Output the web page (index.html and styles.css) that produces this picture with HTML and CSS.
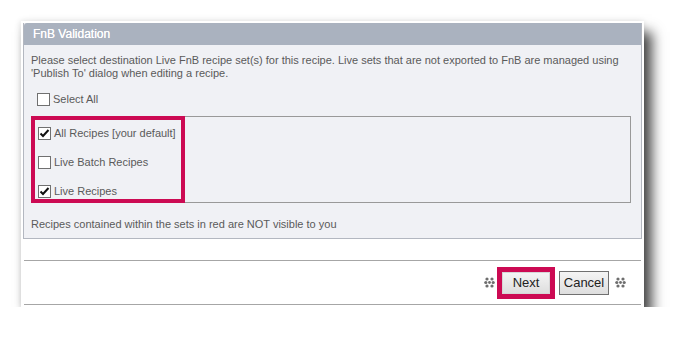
FILE: index.html
```html
<!DOCTYPE html>
<html>
<head>
<link rel="stylesheet" href="styles.css">
</head>
<body>
<div class="dialog">
  <div class="panel">
    <div class="panel-title">FnB Validation</div>
    <div class="panel-body">
      <p class="intro">Please select destination Live FnB recipe set(s) for this recipe. Live sets that are not exported to FnB are managed using 'Publish To' dialog when editing a recipe.</p>

      <label class="check select-all"><span class="box"></span>Select All</label>

      <div class="sets">
        <div class="sets-list">
          <label class="check">
            <span class="box"><svg width="11" height="11" viewBox="0 0 11 11"><path d="M1.5 5.5 L4 8 L9.5 2" fill="none" stroke="#111" stroke-width="2"/></svg></span>All Recipes [your default]
          </label>
          <label class="check"><span class="box"></span>Live Batch Recipes</label>
          <label class="check">
            <span class="box"><svg width="11" height="11" viewBox="0 0 11 11"><path d="M1.5 5.5 L4 8 L9.5 2" fill="none" stroke="#111" stroke-width="2"/></svg></span>Live Recipes
          </label>
        </div>
      </div>

      <p class="note">Recipes contained within the sets in red are NOT visible to you</p>
    </div>
  </div>

  <div class="actions">
    <svg class="dots" width="11" height="11" viewBox="0 0 11 11">
      <circle cx="3" cy="2" r="1.6"/><circle cx="8" cy="2" r="1.6"/>
      <circle cx="1.8" cy="5.5" r="1.6"/><circle cx="5.5" cy="5.5" r="1.4"/><circle cx="9.2" cy="5.5" r="1.6"/>
      <circle cx="3" cy="9" r="1.6"/><circle cx="8" cy="9" r="1.6"/>
    </svg>
    <span class="highlight"><button class="btn btn-next">Next</button></span>
    <button class="btn btn-cancel">Cancel</button>
    <svg class="dots dots-right" width="11" height="11" viewBox="0 0 11 11">
      <circle cx="3" cy="2" r="1.6"/><circle cx="8" cy="2" r="1.6"/>
      <circle cx="1.8" cy="5.5" r="1.6"/><circle cx="5.5" cy="5.5" r="1.4"/><circle cx="9.2" cy="5.5" r="1.6"/>
      <circle cx="3" cy="9" r="1.6"/><circle cx="8" cy="9" r="1.6"/>
    </svg>
  </div>
</div>
</body>
</html>
```

FILE: styles.css
```css
body {
  margin: 0;
  background: #fff;
  font-family: 'Liberation Sans', Arial, sans-serif;
}
.dialog {
  margin: 21px 0 0 21px;
  width: 623px;
  box-sizing: border-box;
  padding: 2px 2px 2px 2px;
  background: #fff;
  box-shadow: 8px 11px 12px rgba(0, 0, 0, 0.72), -1px 0 6px rgba(0, 0, 0, 0.12);
}
.panel {
  border: 1px solid #b3b7c0;
  border-top: none;
  background: #f0f1f5;
}
.panel-title {
  height: 22px;
  line-height: 22px;
  padding-left: 9px;
  background: #aab2bf;
  color: #fff;
  font-size: 12px;
  text-shadow: 0 0 0.4px #fff;
  border-top-left-radius: 3px;
}
.panel-body {
  padding: 9px 10px 7px 7px;
  font-size: 11px;
  line-height: 13px;
  color: #5a5a5a;
}
.intro,
.note {
  margin: 0;
}
.note {
  margin-top: 15px;
}
.check {
  display: flex;
  align-items: center;
  height: 14px;
}
.box {
  width: 11px;
  height: 11px;
  border: 1px solid #707070;
  background: #fff;
  margin-right: 3px;
  display: flex;
}
.select-all {
  margin: 13px 0 0 6px;
  height: 13px;
}
.sets {
  margin-top: 10px;
  height: 87px;
  box-sizing: border-box;
  border: 1px solid #999;
  width: 600px;
}
.sets-list {
  margin: -1px 0 0 -1px;
  width: 154px;
  height: 87px;
  box-sizing: border-box;
  border: 4px solid #cc0a53;
  padding: 6px 0 0 3px;
  display: flex;
  flex-direction: column;
  gap: 15px;
}
.actions {
  margin: 21px 1px 0 1px;
  height: 43px;
  border-top: 1px solid #a6a6a6;
  border-bottom: 1px solid #a6a6a6;
  display: flex;
  justify-content: flex-end;
  align-items: center;
  padding-right: 15px;
}
.dots {
  fill: #6e6e6e;
}
.highlight {
  margin-left: 2px;
  border: 5px solid #cc0a53;
  display: flex;
}
.btn {
  font-family: 'Liberation Sans', Arial, sans-serif;
  font-size: 13px;
  color: #222;
  padding: 0;
  background: linear-gradient(#f4f4f4, #dedede);
  cursor: pointer;
}
.btn-next {
  width: 48px;
  height: 22px;
  border: 1px solid #d6d6d6;
}
.btn-cancel {
  margin-left: 4px;
  width: 50px;
  height: 24px;
  border: 1px solid #707070;
}
.dots-right {
  margin-left: 6px;
}
```
